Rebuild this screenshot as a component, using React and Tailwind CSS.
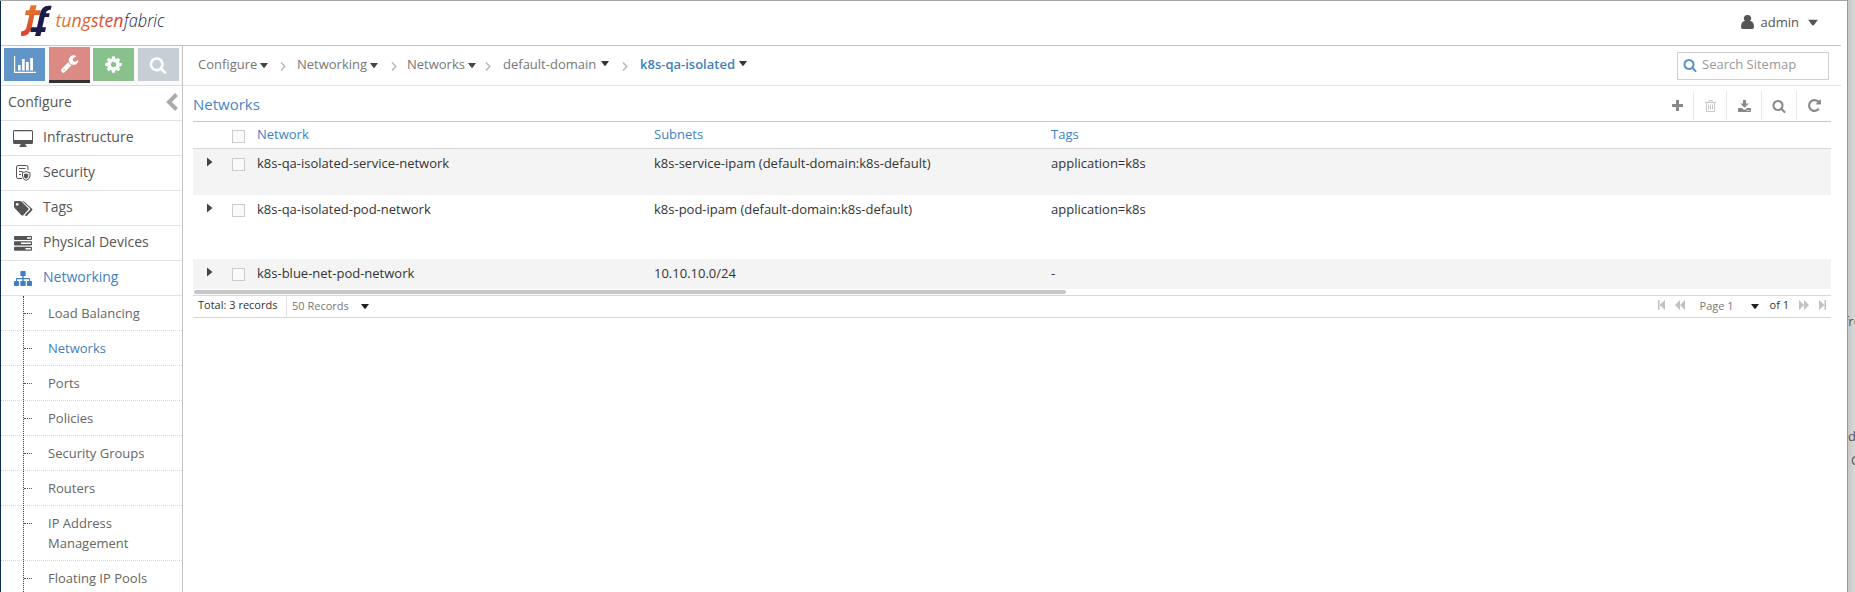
import React from "react";

const P = {
  search:
    "M1216 832q0-185-131.500-316.500t-316.500-131.500-316.500 131.500-131.500 316.500 131.500 316.500 316.500 131.500 316.500-131.500 131.500-316.500zm512 832q0 52-38 90t-90 38q-54 0-90-38l-343-342q-179 124-399 124-143 0-273.500-55.500t-225-150-150-225-55.500-273.500 55.500-273.500 150-225 225-150 273.500-55.500 273.500 55.500 225 150 150 225 55.500 273.500q0 220-124 399l343 343q37 37 37 90z",
  wrench:
    "M448 1472q0-26-19-45t-45-19-45 19-19 45 19 45 45 19 45-19 19-45zm644-420l-682 682q-37 37-90 37-52 0-91-37l-106-108q-38-36-38-90 0-53 38-91l681-681q39 98 114.500 173.500t173.500 114.500zm634-435q0 39-23 106-47 134-164.500 217.500t-258.500 83.500q-185 0-316.500-131.500t-131.500-316.500 131.500-316.500 316.500-131.500q58 0 121.500 16.500t107.500 46.500q16 11 16 28t-16 28l-293 169v224l193 107q5-3 79-48.500t135.500-81 70.500-35.500q15 0 23.500 10t8.500 25z",
  cog: "M1152 896q0-106-75-181t-181-75-181 75-75 181 75 181 181 75 181-75 75-181zm512-109v222q0 12-8 23t-20 13l-185 28q-19 54-39 91 35 50 107 138 10 12 10 25t-9 23q-27 37-99 108t-94 71q-12 0-26-9l-138-108q-44 23-91 38-16 136-29 186-7 28-36 28h-222q-14 0-24.500-8.500t-11.500-21.500l-28-184q-49-16-90-37l-141 107q-10 9-25 9-14 0-25-11-126-114-165-168-7-10-7-23 0-12 8-23 15-21 51-66.500t54-70.500q-27-50-41-99l-183-27q-13-2-21-12.500t-8-23.500v-222q0-12 8-23t19-13l186-28q14-46 39-92-40-57-107-138-10-12-10-24 0-10 9-23 26-36 98.500-107.500t94.500-71.500q13 0 26 10l138 107q44-23 91-38 16-136 29-186 7-28 36-28h222q14 0 24.500 8.500t11.500 21.500l28 184q49 16 90 37l142-107q9-9 24-9 13 0 25 10 129 119 165 170 7 8 7 22 0 12-8 23-15 21-51 66.500t-54 70.500q26 50 41 98l183 28q13 2 21 12.500t8 23.500z",
  repeat:
    "M1664 256v448q0 26-19 45t-45 19h-448q-42 0-59-40-17-39 14-69l138-138q-148-137-349-137-104 0-198.500 40.500t-163.500 109.500-109.500 163.500-40.500 198.500 40.500 198.500 109.500 163.500 163.500 109.500 198.500 40.500q119 0 225-52t179-147q7-10 23-12 15 0 25 9l137 138q9 8 9.500 20.500t-7.500 22.500q-109 132-264 204.500t-327 72.500q-156 0-298-61t-245-164-164-245-61-298 61-298 164-245 245-164 298-61q147 0 284.500 55.500t244.500 156.500l130-129q29-31 70-14 39 17 39 59z",
};

const Fa = ({ d, className }) => (
  <svg viewBox="0 0 1792 1792" className={className} fill="currentColor">
    <path d={d} />
  </svg>
);

const Caret = ({ className = "" }) => (
  <svg viewBox="0 0 8 5" className={"h-[5px] w-2 shrink-0 " + className} fill="currentColor">
    <path d="M0 0H8L4.700 4.600Q4 5.200 3.300 4.600Z" />
  </svg>
);

const Logo = () => (
  <svg width="150" height="40" viewBox="0 0 150 40" className="mt-px">
    <defs>
      <linearGradient id="flame" x1="0" y1="0" x2="0.300" y2="1">
        <stop offset="0" stopColor="#e8832f" />
        <stop offset="1" stopColor="#d9402b" />
      </linearGradient>
      <linearGradient id="word" x1="0" x2="1">
        <stop offset="0" stopColor="#dc7a35" />
        <stop offset="1" stopColor="#d5402d" />
      </linearGradient>
    </defs>
    <g transform="scale(0.3333) translate(-63 -3)">
      <path d="M92 16H110L106 31H122L119 45H103L96 78Q90 108 66 108L62 107L64 94Q78 93 80 80L88 45H75L78 31H88Z" fill="url(#flame)" />
      <path d="M155 17L152 29Q140 29 137 40H149L147 51H134L127 82H138L135 96H124L121 108H105L108 96H91L94 82H111L119 45Q124 17 146 17Z" fill="#191b48" />
    </g>
    <text x="34.500" y="25.500" fontSize="18" fontStyle="italic" fontWeight="500" fontFamily="Open Sans, sans-serif" textLength="68" lengthAdjust="spacingAndGlyphs" fill="url(#word)">tungsten</text>
    <text x="103" y="25.500" fontSize="18" fontStyle="italic" fontWeight="300" fontFamily="Open Sans, sans-serif" textLength="40.500" lengthAdjust="spacingAndGlyphs" fill="#191b48">fabric</text>
  </svg>
);

const MonitorIcon = () => (
  <svg width="20" height="17" viewBox="0 0 20 17" fill="currentColor">
    <path fillRule="evenodd" d="M1.500 0h17Q20 0 20 1.500v11Q20 14 18.500 14h-17Q0 14 0 12.500v-11Q0 0 1.500 0ZM1 1.200v8.800h18V1.200Z" />
    <path d="M7.500 14h5v1.500h1V17h-7v-1.500h1z" />
  </svg>
);
const SecurityIcon = () => (
  <svg width="15" height="16" viewBox="0 0 15 16" fill="none" stroke="currentColor">
    <path d="M6 13.500H2Q.5 13.500.5 12V2Q.5.500 2 .5H10.500Q12 .5 12 2V5M3 3.500h6.500M3 6.500h3.500M3 9.500h2" />
    <path d="M10 6.500Q12 7.500 14 7.500V11Q14 14 10 15.500Q6.500 14 6.500 11V7.500Q8.500 7.500 10 6.500Z" />
    <path d="M10 8.500l2.200.8v2Q12 13 10 13.800Q8 13 8 11.500V9.300Z" fill="currentColor" stroke="none" />
  </svg>
);
const TagsIcon = () => (
  <svg width="19" height="15" viewBox="0 0 19 15" fill="currentColor">
    <path fillRule="evenodd" d="M0 1.200Q0 0 1.200 0H6Q7 0 8 1L14 7Q15 8 14 9L9.300 14.300Q8.400 15.200 7.400 14.300L1 7.500Q0 6.500 0 5.500ZM3.200 1.900a1.400 1.400 0 1 0 .01 0Z" />
    <path d="M8 0Q9.500 0 10.500 1L17.800 7.500Q18.900 8.500 17.900 9.600L13.200 14.400Q12 15.500 10.800 14.300L15.800 9Q16.600 8 15.800 7.100Z" />
  </svg>
);
const ServerIcon = () => (
  <svg width="18" height="15" viewBox="0 0 18 15" fill="currentColor">
    <path fillRule="evenodd" d="M.7 0H17.300L18 .7V3.300L17.300 4H.7L0 3.300V.7ZM13 1.300v1.400h4V1.300ZM.7 5.300H17.300L18 6V8.700L17.300 9.400H.7L0 8.700V6ZM7 6.500V8h10V6.500ZM.7 10.700H17.300L18 11.400V14L17.300 14.700H.7L0 14V11.400ZM11.500 12v1.400H17V12Z" />
  </svg>
);
const SitemapIcon = () => (
  <svg width="18" height="15" viewBox="0 0 18 15" fill="currentColor">
    <path d="M7 0h4q.6 0 .6.600v3.800q0 .6-.6.600H9.700v2H15q1 0 1 1v2h1.300q.7 0 .7.700v3.600q0 .7-.7.700h-3.600q-.7 0-.7-.7v-3.600q0-.7.7-.7H15V8.200H9.700V10H11q.7 0 .7.700v3.600q0 .7-.7.700H7q-.7 0-.7-.7v-3.600q0-.7.700-.7h1.300V8.200H3V10h1.300q.7 0 .7.700v3.600q0 .7-.7.700H.7q-.7 0-.7-.7v-3.600Q0 10 .7 10H2V8q0-1 1-1h5.300V5H7q-.6 0-.6-.6V.6Q6.400 0 7 0Z" />
  </svg>
);

const NAV = [
  ["Infrastructure", MonitorIcon],
  ["Security", SecurityIcon],
  ["Tags", TagsIcon],
  ["Physical Devices", ServerIcon],
  ["Networking", SitemapIcon],
];
const SUB = ["Load Balancing", "Networks", "Ports", "Policies", "Security Groups", "Routers", "IP Address Management", "Floating IP Pools"];

function Sidebar() {
  return (
    <aside className="flex w-[182px] shrink-0 flex-col border-r border-[#c5c5c5]">
      <div className="flex h-10 shrink-0 items-start border-b border-[#dcdcdc] bg-[#fafafa] pl-[3px] pt-px text-white">
        <div className="mt-px flex h-[33px] w-[41px] items-center justify-center bg-[#6295c7]">
          <svg width="22" height="17" viewBox="0 0 22 17" fill="currentColor">
            <path d="M0 0h1.200v15.800H22V17H0zM4 9h2.700v5.500H4zM8 3h2.700v11.500H8zM12 6h2.700v8.500H12zM16.200 2H19v12.500h-2.800z" />
          </svg>
        </div>
        <div className="ml-1 flex h-9 w-[41px] items-center justify-center border-b-[3px] border-[#333] bg-[#dc8a84]">
          <Fa d={P.wrench} className="size-[19px]" />
        </div>
        <div className="ml-[3px] mt-px flex h-[33px] w-[41px] items-center justify-center bg-[#88c18c]">
          <Fa d={P.cog} className="size-[19px]" />
        </div>
        <div className="ml-1 mt-px flex h-[33px] w-[41px] items-center justify-center bg-[#c7ced5] pr-[2px]">
          <Fa d={P.search} className="size-[18px]" />
        </div>
      </div>
      <div className="flex h-[35px] shrink-0 items-center justify-between border-b border-[#e2e2e2] pb-[3px] pl-[7px] pr-1 text-[14px] text-[#555]">
        Configure
        <svg width="12" height="18" viewBox="0 0 12 18" fill="none" stroke="#aaa" strokeWidth="4">
          <path d="M10.500 1.500L3 9l7.500 7.500" />
        </svg>
      </div>
      {NAV.map(([label, Icon]) => (
        <div key={label} className={"flex h-[35px] shrink-0 items-center border-b border-[#e2e2e2] text-[14px] " + (label === "Networking" ? "text-[#3f7fbf]" : "text-[#555]")}>
          <span className="ml-3 flex w-5 justify-center"><Icon /></span>
          <span className="ml-2.5 pb-1">{label}</span>
        </div>
      ))}
      <div className="relative">
        <div className="absolute bottom-0 left-[22px] top-0 border-l border-dotted border-[#333]" />
        {SUB.map((s) => (
          <div key={s} className="flex border-b border-dotted border-[#d8d8d8] pb-[7px] pt-[7px] first:pt-2">
            <span className="ml-[23px] mt-[10px] h-0 w-2 border-t border-dotted border-[#555]" />
            <span className={"ml-4 w-[120px] text-[13px] leading-[20px] " + (s === "Networks" ? "text-[#3f7fbf]" : "text-[#666]")}>{s}</span>
          </div>
        ))}
      </div>
    </aside>
  );
}

const Chevron = ({ className }) => (
  <svg width="6" height="9" viewBox="0 0 6 9" fill="none" stroke="#b5b9c4" strokeWidth="1.500" className={"mt-0.5 shrink-0 " + className}>
    <path d="M1 .5l3.800 4L1 8.500" />
  </svg>
);

function Breadcrumbs() {
  return (
    <div className="flex h-10 shrink-0 items-center border-b border-[#e2e2e2] pl-[15px] text-[13px] text-[#777]">
      <div className="flex w-[82px] items-center pb-px">Configure<Caret className="ml-[3px] text-[#444]" /></div>
      <div className="flex w-[17px]"><Chevron className="" /></div>
      <div className="flex w-[94px] items-center pb-px">Networking<Caret className="ml-[3px] text-[#444]" /></div>
      <div className="flex w-[16px]"><Chevron className="" /></div>
      <div className="flex w-[78px] items-center pb-px">Networks<Caret className="ml-[3px] text-[#444]" /></div>
      <div className="flex w-[18px]"><Chevron className="" /></div>
      <div className="flex w-[119px] items-center pb-0.5">default-domain<Caret className="ml-[5px] mb-0.5 text-[#333]" /></div>
      <div className="flex w-[18px]"><Chevron className="" /></div>
      <div className="flex items-center pb-0.5 font-semibold text-[#3f7fbf]"><span className="whitespace-nowrap">k8s-qa-isolated</span><Caret className="ml-[4px] mb-0.5 text-[#333]" /></div>
      <div className="ml-auto mr-3 flex h-7 w-[152px] items-center border border-[#d0d0d0] pb-px pl-[5px] text-[13px] text-[#999]">
        <Fa d={P.search} className="mr-[5px] size-[14px] text-[#5b93c8]" />
        Search Sitemap
      </div>
    </div>
  );
}

const ROWS = [
  ["k8s-qa-isolated-service-network", "k8s-service-ipam (default-domain:k8s-default)", "application=k8s", "h-[46px] bg-[#f4f4f4] pt-1"],
  ["k8s-qa-isolated-pod-network", "k8s-pod-ipam (default-domain:k8s-default)", "application=k8s", "h-[64px] pt-1"],
  ["k8s-blue-net-pod-network", "10.10.10.0/24", "-", "h-[30px] bg-[#f4f4f4] pt-1"],
];

const Box = () => <span className="mr-3 mt-[5px] size-[13px] shrink-0 border border-[#ccc] bg-[#fafafa]" />;

function NetworksGrid() {
  return (
    <section className="ml-[10px] mr-[10px] text-[13px]">
      <div className="flex h-9 justify-between border-b border-[#c8c8c8]">
        <h2 className="pt-[6px] text-[15px] leading-6 text-[#4585c4]">Networks</h2>
        <div className="mt-[5px] flex h-[29px] items-center text-[#888] [&>div]:flex [&>div]:h-full [&>div]:items-center [&>div]:justify-center">
          <div className="w-8"><svg width="11" height="11" viewBox="0 0 11 11" fill="currentColor"><path d="M4 .5q0-.5.500-.5h2q.5 0 .5.500V4h3.500q.5 0 .5.500v2q0 .5-.5.500H7v3.500q0 .5-.5.500h-2q-.5 0-.5-.5V7H.5Q0 7 0 6.500v-2Q0 4 .5 4H4z" /></svg></div>
          <div className="w-[33px] border-l border-[#e8e8e8] text-[#c8c8c8]"><svg width="11" height="12" viewBox="0 0 11 12" fill="none" stroke="currentColor"><path d="M0 2.500h11M3.500 2.500L4 .5h3l.5 2M1.500 2.500V11.500h8V2.500M3.500 4.500v5M5.500 4.500v5M7.500 4.500v5" /></svg></div>
          <div className="w-[35px] border-l border-[#e8e8e8]"><svg width="13" height="12" viewBox="0 0 13 12" fill="currentColor"><path fillRule="evenodd" d="M5 0h3v3.500h2.700L6.500 7.800 2.300 3.500H5zM.7 8H4l1.500 1.400q1 .8 2 0L9 8h3.300q.7 0 .7.700v2.600q0 .7-.7.700H.7q-.7 0-.7-.7V8.700Q0 8 .7 8ZM8.500 10v1h1v-1Zm2 0v1h1v-1Z" /></svg></div>
          <div className="w-[35px] border-l border-[#e8e8e8]"><Fa d={P.search} className="size-[14px]" /></div>
          <div className="w-[35px] border-l border-[#e8e8e8]"><Fa d={P.repeat} className="size-[15px]" /></div>
        </div>
      </div>
      <div className="flex h-[27px] border-b border-[#d8d8d8] pl-[39px] pt-[3px] leading-[18px] text-[#3f7fbf]">
        <Box /><span className="w-[397px]">Network</span><span className="w-[397px]">Subnets</span><span>Tags</span>
      </div>
      {ROWS.map(([n, s, t, cls]) => (
        <div key={n} className={"flex leading-5 text-[#333] " + cls}>
          <span className="flex w-[39px] pl-[14px] pt-[4px]"><svg width="6" height="10" viewBox="0 0 6 10" fill="#444"><path d="M0 0.500L5.500 5L0 9.500Z" /></svg></span>
          <Box /><span className="w-[397px]">{n}</span><span className="w-[397px]">{s}</span><span>{t}</span>
        </div>
      ))}
      <div className="h-[7px] border-b border-[#d8d8d8] pl-px pt-px"><div className="h-1 w-[872px] rounded-full bg-[#c6c6c6]" /></div>
      <div className="flex h-[22px] items-center border-b border-[#d8d8d8] text-[11px]">
        <span className="w-[93px] pb-[3px] pl-[5px] text-[#333]">Total: 3 records</span>
        <span className="flex h-full items-center border-l border-[#e2e2e2] pl-[5px] text-[#777]"><span className="w-[69px]">50 Records</span><Caret className="text-[#222]" /></span>
        <div className="ml-auto flex items-center text-[#c2c2c2]">
          <svg width="7" height="10" viewBox="0 0 7 10" className="mb-1 mr-[10px]" fill="currentColor"><path d="M0 0h1.500v10H0zM7 0v10L1.500 5z" /></svg>
          <svg width="10" height="10" viewBox="0 0 10 10" className="mb-1 mr-[15px]" fill="currentColor"><path d="M5 0v10L0 5zM10 0v10L5 5z" /></svg>
          <span className="w-[51px] text-[#777]">Page 1</span>
          <Caret className="mr-[11px] text-[#222]" />
          <span className="mr-[10px] pb-[3px] text-[#333]">of 1</span>
          <svg width="10" height="10" viewBox="0 0 10 10" className="mb-1 mr-[10px]" fill="currentColor"><path d="M0 0v10l5-5zM5 0v10l5-5z" /></svg>
          <svg width="7" height="10" viewBox="0 0 7 10" className="mb-1 mr-[5px]" fill="currentColor"><path d="M5.500 0H7v10H5.500zM0 0v10l5.500-5z" /></svg>
        </div>
      </div>
    </section>
  );
}

export default function App() {
  return (
    <div className="flex h-[592px] w-[1855px] overflow-hidden bg-white font-['Open_Sans',sans-serif]">
      <div className="flex w-[1841px] shrink-0 flex-col border-l border-[#0f2a52]">
        <header className="flex h-[46px] shrink-0 items-start justify-between border-b border-[#c5c5c5] pl-5">
          <Logo />
          <div className="mr-6 flex h-[46px] items-center text-[13px] text-[#555]">
            <svg width="13" height="14" viewBox="0 0 13 14" fill="currentColor" className="mr-[7px] mb-0.5"><path d="M6.500 0a3.500 3.500 0 0 1 2.600 6Q13 6.500 13 12q0 2-1.800 2H1.800Q0 14 0 12 0 6.500 3.900 6A3.500 3.500 0 0 1 6.500 0Z" /></svg>
            admin
            <Caret className="mb-0.5 ml-[10px] scale-125" />
          </div>
        </header>
        <div className="flex min-h-0 grow">
          <Sidebar />
          <main className="flex min-w-0 grow flex-col"><Breadcrumbs /><NetworksGrid /></main>
        </div>
      </div>
      <div className="w-[6px] shrink-0" />
      <div className="relative w-2 shrink-0 overflow-hidden border-l border-[#999] bg-gradient-to-r from-[#c8c8c8] to-[#d9d9d9] text-[13px] text-[#555]">
        <span className="absolute -left-1 top-[312px]">fro</span>
        <span className="absolute left-0 top-[427px]">d</span>
        <span className="absolute left-[3px] top-[451px]">C</span>
      </div>
      <div className="fixed left-0 top-0 h-px w-[1847px] bg-[#a5a5a5]" />
    </div>
  );
}
